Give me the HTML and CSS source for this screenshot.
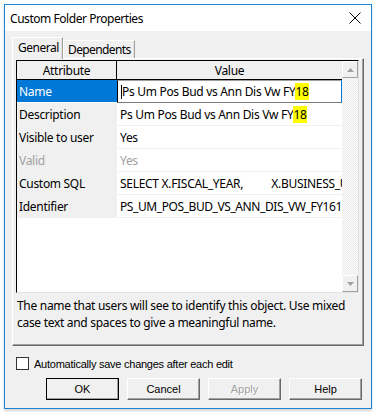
FILE: index.html
```html
<!DOCTYPE html>
<html>
<head>
<meta charset="utf-8">
<link rel="stylesheet" href="styles.css">
</head>
<body>
<div class="window">
  <div class="titlebar">
    <span class="title">Custom Folder Properties</span>
    <svg class="close" width="12" height="12" viewBox="0 0 12 12"><path d="M0.5 0.5 L11.5 11.5 M11.5 0.5 L0.5 11.5" stroke="#000" stroke-width="1" fill="none"/></svg>
  </div>
  <div class="client">
    <div class="tabs">
      <div class="tab active">General</div>
      <div class="tab">Dependents</div>
    </div>
    <div class="panel">
      <div class="listbox">
        <div class="grid">
          <div class="row head">
            <div class="cell attr">Attribute</div>
            <div class="cell val">Value</div>
          </div>
          <div class="row">
            <div class="cell attr sel">Name</div>
            <div class="cell val edit"><span class="caret"></span>Ps Um Pos Bud vs Ann Dis Vw FY<span class="hl">18</span></div>
          </div>
          <div class="row">
            <div class="cell attr">Description</div>
            <div class="cell val">Ps Um Pos Bud vs Ann Dis Vw FY<span class="hl">18</span></div>
          </div>
          <div class="row">
            <div class="cell attr">Visible to user</div>
            <div class="cell val">Yes</div>
          </div>
          <div class="row dis">
            <div class="cell attr">Valid</div>
            <div class="cell val">Yes</div>
          </div>
          <div class="row">
            <div class="cell attr">Custom SQL</div>
            <div class="cell val">SELECT X.FISCAL_YEAR,&nbsp;&nbsp;&nbsp;&nbsp;&nbsp;&nbsp;&nbsp;&nbsp;&nbsp;&nbsp;X.BUSINESS_U</div>
          </div>
          <div class="row">
            <div class="cell attr">Identifier</div>
            <div class="cell val tight">PS_UM_POS_BUD_VS_ANN_DIS_VW_FY161</div>
          </div>
        </div>
        <div class="scrollbar">
          <div class="sbtn"><svg width="7" height="4" viewBox="0 0 7 4"><path d="M0 4 L3.5 0 L7 4 Z" fill="#a0a0a0"/></svg></div>
          <div class="track"></div>
          <div class="sbtn"><svg width="7" height="4" viewBox="0 0 7 4"><path d="M0 0 L3.5 4 L7 0 Z" fill="#a0a0a0"/></svg></div>
        </div>
      </div>
      <p class="help">The name that users will see to identify this object. Use mixed case text and spaces to give a meaningful name.</p>
    </div>
    <label class="check"><span class="box"></span>Automatically save changes after each edit</label>
    <div class="buttons">
      <div class="btn default">OK</div>
      <div class="btn">Cancel</div>
      <div class="btn disabled">Apply</div>
      <div class="btn">Help</div>
    </div>
  </div>
</div>
</body>
</html>
```
FILE: styles.css
```css
html, body {
  margin: 0;
  padding: 0;
  background: #fff;
}
body {
  width: 373px;
  height: 412px;
  overflow: hidden;
}
.window {
  margin: 4px 0 0 4px;
  width: 366px;
  height: 403px;
  border: 1px solid #1883d7;
  background: #f0f0f0;
  display: flex;
  flex-direction: column;
  box-shadow: 0 2px 3px rgba(0,0,0,0.18);
}
.titlebar {
  height: 26px;
  background: #fff;
  display: flex;
  align-items: center;
  justify-content: space-between;
  padding: 0 10px 0 5px;
  flex: none;
}
.title {
  font-family: "Noto Sans", sans-serif;
  font-size: 12px;
  color: #000;
  letter-spacing: -0.45px;
}
.close { display: block; }
.client {
  flex: 1;
  display: flex;
  flex-direction: column;
  padding: 6px 0 0 7px;
}
.tabs {
  display: flex;
  align-items: flex-end;
  height: 21px;
  font-family: "Noto Sans", sans-serif;
  font-size: 12px;
  position: relative;
  z-index: 1;
}
.tab {
  height: 17px;
  line-height: 17px;
  padding: 0 3px 0 4px;
  border-top: 1px solid #fff;
  border-left: 1px solid #fff;
  border-right: 1px solid #a0a0a0;
  box-shadow: inset -1px 0 #e3e3e3;
  background: #f0f0f0;
  color: #000;
  letter-spacing: -0.6px;
}
.tab.active {
  height: 21px;
  line-height: 19px;
  padding: 0 4px 0 5px;
  margin-bottom: -1px;
  width: 40px;
  letter-spacing: -0.5px;
}
.panel {
  border-top: 1px solid #fff;
  border-left: 1px solid #fff;
  border-right: 1px solid #696969;
  border-bottom: 1px solid #696969;
  box-shadow: inset -1px -1px #a0a0a0;
  padding: 1px 0 0 3px;
  box-sizing: border-box;
  width: 352px;
  height: 288px;
}
.listbox {
  width: 343px;
  height: 233px;
  box-sizing: border-box;
  border: 1px solid #000;
  border-right-color: #e3e3e3;
  border-bottom-color: #e3e3e3;
  background: #fff;
  display: flex;
}
.grid {
  width: 325px;
  font-family: "Noto Sans", sans-serif;
  font-size: 12px;
  color: #000;
}
.row {
  display: flex;
  height: 23px;
}
.cell {
  box-sizing: border-box;
  white-space: nowrap;
  overflow: hidden;
  display: flex;
  align-items: center;
  letter-spacing: -0.3px;
}
.cell.tight {
  letter-spacing: -0.42px;
}
.cell.attr {
  width: 100px;
  background: #f0f0f0;
  padding-left: 2px;
}
.cell.val {
  width: 225px;
  padding-left: 3px;
  border-bottom: 1px solid #f0f0f0;
}
.row.head {
  height: 19px;
  border-bottom: 1px solid #000;
  box-sizing: border-box;
}
.row.head .cell {
  justify-content: center;
  background: #f0f0f0;
  border-bottom: none;
  padding: 0;
}
.row.head .attr {
  border-right: 1px solid #000;
}
.cell.sel {
  background: #0078d7;
  color: #fff;
  height: 22px;
}
.cell.edit {
  border: 1px solid #7a7a7a;
  border-right-color: #0078d7;
  border-top-color: #a0a0a0;
  border-left-color: #000;
  padding-left: 3px;
}
.caret {
  display: inline-block;
  width: 1px;
  height: 14px;
  background: #000;
}
.hl {
  background: #ffff00;
}
.row.dis .cell {
  color: #a0a0a0;
}
.scrollbar {
  width: 16px;
  display: flex;
  flex-direction: column;
  background-color: #fff;
  background-image: repeating-conic-gradient(#e8e8e8 0 25%, #fff 0 50%);
  background-size: 2px 2px;
}
.sbtn {
  height: 17px;
  flex: none;
  background: #f0f0f0;
  border-top: 1px solid #fff;
  border-left: 1px solid #fff;
  border-right: 1px solid #a0a0a0;
  border-bottom: 1px solid #a0a0a0;
  box-sizing: border-box;
  display: flex;
  align-items: center;
  justify-content: center;
}
.track { flex: 1; }
.help {
  margin: 4px 0 0 1px;
  font-family: "Noto Sans", sans-serif;
  font-size: 12px;
  line-height: 17px;
  color: #000;
  width: 342px;
  letter-spacing: -0.3px;
}
.check {
  display: flex;
  align-items: center;
  margin: 11px 0 0 4px;
  height: 13px;
  font-family: "Liberation Sans", sans-serif;
  font-size: 11px;
  color: #000;
  letter-spacing: -0.25px;
}
.box {
  width: 11px;
  height: 11px;
  border: 1px solid #333;
  background: #fff;
  margin-right: 5px;
}
.buttons {
  display: flex;
  gap: 8px;
  margin: 8px 0 0 34px;
}
.btn {
  width: 73px;
  height: 22px;
  box-sizing: border-box;
  background: #f0f0f0;
  border-top: 1px solid #fff;
  border-left: 1px solid #fff;
  border-right: 1px solid #696969;
  border-bottom: 1px solid #696969;
  box-shadow: inset -1px -1px #a0a0a0;
  font-family: "Liberation Sans", sans-serif;
  font-size: 11px;
  color: #000;
  display: flex;
  align-items: center;
  justify-content: center;
}
.btn.default {
  outline: 1px solid #000;
  outline-offset: -1px;
}
.btn.disabled {
  color: #a0a0a0;
  text-shadow: 1px 1px #fff;
}
```
